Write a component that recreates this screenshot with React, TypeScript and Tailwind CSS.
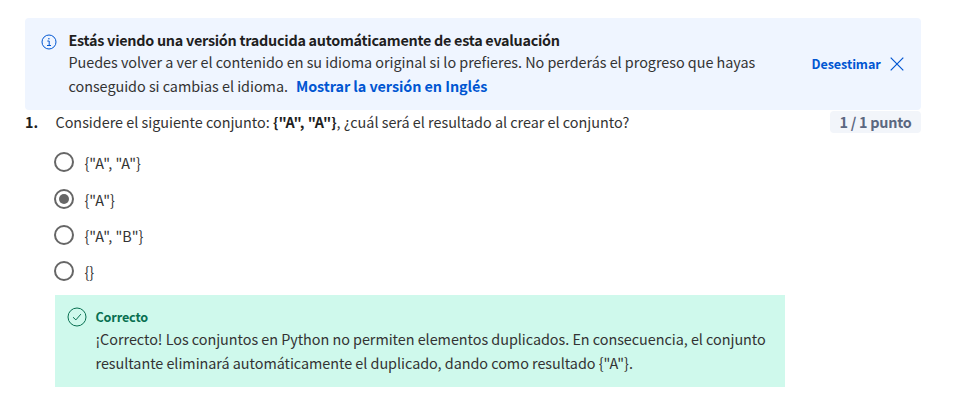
const options = ['{"A", "A"}', '{"A"}', '{"A", "B"}', '{}'];
const rowHeights = ['h-[37px]', 'h-[36px]', 'h-[36px]', 'h-[36px]'];

function InfoIcon() {
  return (
    <svg width="16" height="16" viewBox="0 0 16 16" fill="none" stroke="#0056d2" strokeWidth="1">
      <circle cx="8" cy="8" r="7" />
      <path d="M6.3 7h1.9v4.2M6 11.5h4" />
      <circle cx="7.9" cy="4.7" r=".75" fill="#0056d2" stroke="none" />
    </svg>
  );
}

function Radio({ checked }: { checked: boolean }) {
  return (
    <svg width="20" height="20" viewBox="0 0 20 20">
      <circle cx="10" cy="10" r="9" fill="#fff" stroke="#666" strokeWidth="2" />
      {checked && <circle cx="10" cy="10" r="5" fill="#666" />}
    </svg>
  );
}

export default function App() {
  return (
    <main className="h-[410px] w-[955px] overflow-hidden bg-white pt-[18px] pl-[25px] font-['Noto_Sans_CJK_SC','Noto_Sans',sans-serif] text-[14.4px] leading-6 whitespace-nowrap text-[#333]">
      <section className="flex h-[92px] w-[896px] rounded-[4px] bg-[#eff5ff]">
        <div className="ml-4 mt-4 w-[27.5px]">
          <InfoIcon />
        </div>
        <div className="w-[743px] pt-[10px]">
          <h2 className="h-[22px] font-bold tracking-[-0.275px] text-[#1f1f1f]"><span>Estás viendo una versión traducida automáticamente de esta evaluación</span></h2>
          <p className="h-6 tracking-[-0.03px]"><span>Puedes volver a ver el contenido en su idioma original si lo prefieres. No perderás el progreso que hayas</span></p>
          <p className="flex h-6">
            <span className="tracking-[-0.03px]">conseguido si cambias el idioma.</span>
            <a className="ml-[8px] font-bold tracking-[-0.07px] text-[#0056d2]">Mostrar la versión en Inglés</a>
          </p>
        </div>
        <button className="flex items-center gap-[9px] text-[12.6px] font-bold tracking-[-0.08px] text-[#0056d2]">
          <span>Desestimar</span>
          <svg width="14" height="14" viewBox="0 0 14 14" stroke="#0056d2" strokeWidth="1.2"><path d="M.7.7l12.6 12.6M13.3.7L.7 13.3" /></svg>
        </button>
      </section>

      <section className="flex h-[33px] w-[896px]">
        <span className="w-[30.5px] font-bold text-[#1f1f1f]">1.</span>
        <p className="grow tracking-[-0.015px]"><span>Considere el siguiente conjunto: <b className="text-[#1f1f1f]">{'{"A", "A"}'}</b>, ¿cuál será el resultado al crear el conjunto?</span></p>
        <span className="mt-px flex h-[22px] w-[91px] items-center justify-center rounded-[4px] bg-[#f2f5fa] font-bold tracking-[-0.25px] text-[#5b6780]">1 / 1 punto</span>
      </section>

      <ul className="ml-[29px] mt-[9px] h-[143px]">
        {options.map((label, i) => (
          <li key={label} className={`flex gap-[10.5px] ${rowHeights[i]}`}>
            <Radio checked={i === 1} />
            <span className="-mt-px">{label}</span>
          </li>
        ))}
      </ul>

      <section className="ml-[30px] flex h-[92px] w-[730px] bg-[#cff9ec] pt-[10px] pl-3">
        <svg className="mt-[2px] mr-[8.5px]" width="20" height="20" viewBox="0 0 20 20" fill="none" stroke="#087051">
          <circle cx="10" cy="10" r="9" />
          <path d="M6 10.2l2.9 2.7 5-5.8" />
        </svg>
        <div>
          <h3 className="h-[22px] text-[12.6px] font-bold tracking-[-0.15px] text-[#087051]"><span>Correcto</span></h3>
          <p className="tracking-[-0.035px]"><span>¡Correcto! Los conjuntos en Python no permiten elementos duplicados. En consecuencia, el conjunto</span></p>
          <p className="tracking-[-0.035px]"><span>resultante eliminará automáticamente el duplicado, dando como resultado {'{"A"}'}.</span></p>
        </div>
      </section>
    </main>
  );
}
